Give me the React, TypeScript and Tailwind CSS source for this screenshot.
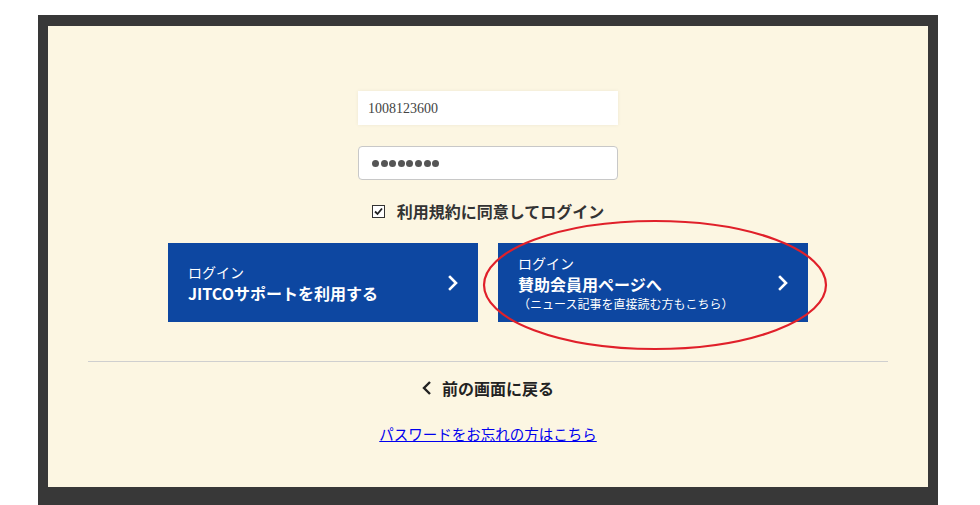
import React from "react";

const jp = '"Noto Sans CJK JP", "Noto Sans", sans-serif';

function Chevron({ color = "#fff", className = "" }: { color?: string; className?: string }) {
  return (
    <svg width="10" height="16" viewBox="0 0 10 16" className={className}>
      <path d="M2 2 L8 8 L2 14" fill="none" stroke={color} strokeWidth="2.6" strokeLinecap="square" />
    </svg>
  );
}

export default function App() {
  return (
    <div className="bg-white min-h-[505px] pt-[15px] pl-[38px]" style={{ fontFamily: jp }}>
      <div className="w-[900px] bg-[#383838] pt-[11px] px-[10px] pb-[30px]">
        <div className="relative h-[461px] bg-[#fcf6e2] flex flex-col items-center">
          <div className="mt-[65px] w-[260px] h-[34px] bg-white shadow-[0_0_4px_rgba(0,0,0,0.06)] flex items-center pl-[10px] text-[14px] text-[#444]" style={{ fontFamily: '"Liberation Serif", serif' }}>
            1008123600
          </div>
          <div className="mt-[21px] w-[260px] h-[34px] bg-white border border-[#c8c8c8] rounded-[4px] flex items-center pl-[13px] gap-[1.6px]">
            {Array.from({ length: 8 }).map((_, i) => (
              <span key={i} className="block w-[7px] h-[7px] rounded-full bg-[#555]" />
            ))}
          </div>
          <div className="mt-[20px] flex items-center gap-[12px] h-[22px]">
            <svg width="13" height="13" viewBox="0 0 13 13">
              <rect x="0.5" y="0.5" width="12" height="12" fill="#fff" stroke="#333" />
              <path d="M3 6.5 L5.5 9 L10 3.5" fill="none" stroke="#222" strokeWidth="1.8" />
            </svg>
            <span className="text-[16px] font-bold leading-[22px] text-[#333]">利用規約に同意してログイン</span>
          </div>
          <div className="mt-[21px] flex gap-[20px]">
            <div className="w-[310px] h-[79px] bg-[#0d47a1] flex items-center justify-between pl-[20px] pr-[20px] text-white">
              <div className="flex flex-col pt-[2px]">
                <span className="text-[14px] leading-[18px]">ログイン</span>
                <span className="text-[16px] font-bold leading-[24px]">JITCOサポートを利用する</span>
              </div>
              <Chevron />
            </div>
            <div className="w-[310px] h-[79px] bg-[#0d47a1] flex items-center justify-between pl-[20px] pr-[20px] text-white">
              <div className="flex flex-col">
                <span className="text-[14px] leading-[18px]">ログイン</span>
                <span className="text-[16px] font-bold leading-[24px]">賛助会員用ページへ</span>
                <span className="text-[12px] leading-[16px]">（ニュース記事を直接読む方もこちら）</span>
              </div>
              <Chevron />
            </div>
          </div>
          <div className="mt-[39px] w-[800px] h-px bg-[#cfcfcf]" />
          <div className="mt-[15px] flex items-center gap-[10px] h-[22px]">
            <svg width="10" height="16" viewBox="0 0 10 16">
              <path d="M8 2 L2 8 L8 14" fill="none" stroke="#222" strokeWidth="2.4" />
            </svg>
            <span className="text-[16px] font-bold leading-[22px] text-[#222]">前の画面に戻る</span>
          </div>
          <a className="mt-[25px] text-[14.5px] leading-[20px] text-[#0000ee] underline" href="#">
            パスワードをお忘れの方はこちら
          </a>
          <svg className="absolute left-[433px] top-[192px] pointer-events-none" width="348" height="134" viewBox="0 0 348 134">
            <ellipse cx="174" cy="67" rx="171" ry="64" fill="none" stroke="#e0202a" strokeWidth="2.2" />
          </svg>
        </div>
      </div>
    </div>
  );
}
